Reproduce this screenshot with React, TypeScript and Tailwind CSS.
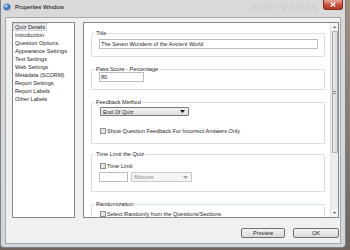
import React from "react";

const Check = () => (
  <span className="w-[6px] h-[6px] shrink-0 border border-[#8e8f8f] bg-[#e4e4e4]" />
);

const Arrow = ({ color }: { color: string }) => (
  <svg width="5" height="3" viewBox="0 0 5 3" className="shrink-0">
    <path d="M0 0 L5 0 L2.5 3 Z" fill={color} />
  </svg>
);

const GroupBox = ({
  label,
  className,
  children,
}: {
  label: string;
  className: string;
  children: React.ReactNode;
}) => (
  <div className={`relative w-[234px] ml-[7px] shrink-0 border border-[#d5dfe5] rounded-[2px] pl-[7px] pr-[6px] ${className}`}>
    <span className="absolute left-[3px] top-[-4px] bg-white px-[1px] leading-[6px] whitespace-nowrap">{label}</span>
    {children}
  </div>
);

export default function App() {
  const items = [
    "Quiz Details",
    "Introduction",
    "Question Options",
    "Appearance Settings",
    "Text Settings",
    "Web Settings",
    "Metadata (SCORM)",
    "Report Settings",
    "Report Labels",
    "Other Labels",
  ];
  return (
    <div className="w-[350px] h-[250px] overflow-hidden bg-gradient-to-b from-[#a39080] to-[#6f655e] font-['Liberation_Sans',Arial,sans-serif] text-[5.6px] leading-[6px] text-[#262626]">
      <div className="w-[346px] h-[248px] flex flex-col bg-gradient-to-b from-[#dbd9d7] to-[#d3d6da] border-x border-b border-[#7c8289] rounded-b-[4px]">
        {/* title bar */}
        <div className="h-[17px] shrink-0 flex items-start">
          <svg width="8" height="8" viewBox="0 0 8 8" className="ml-[2px] mt-[3px]">
            <circle cx="4" cy="4" r="3.6" fill="#3a78c8" />
            <circle cx="3" cy="3" r="1.8" fill="#9cc8f0" />
            <path d="M4.5 5 L7 6.5 L6 7.5 Z" fill="#e8a030" />
          </svg>
          <span className="ml-[4px] mt-[4px] text-[5.8px] leading-[6px] text-black whitespace-nowrap">Properties Window</span>
          <div className="flex-1" />
          <span className="mt-[1px] mr-[4px] font-['Liberation_Serif',serif] text-[11px] leading-[12px] tracking-[1px] text-[#cfcac6] whitespace-nowrap">SOFTPEDIA</span>
          <div className="w-[20px] h-[10px] mr-[2px] flex items-center justify-center rounded-b-[3px] border border-t-0 border-[#7d2c20] bg-gradient-to-b from-[#e7a897] via-[#cf5440] to-[#b5381f]">
            <svg width="6" height="5" viewBox="0 0 6 5">
              <path d="M0.8 0.5 L5.2 4.5 M5.2 0.5 L0.8 4.5" stroke="#ffffff" strokeWidth="1.3" />
            </svg>
          </div>
        </div>
        {/* client */}
        <div className="flex-1 mx-[4px] mb-[3px] flex flex-col bg-[#f0f0f0] border border-[#a3a9b0] pl-[6px] pr-[1px] pt-[4px]">
          <div className="flex h-[196px] gap-[8px] shrink-0">
            <div className="w-[63px] h-full shrink-0 border border-[#828790] bg-white pl-[1px] flex flex-col">
              {items.map((t, i) => (
                <div key={t} className="h-[8px] leading-[8px] whitespace-nowrap">
                  <span className={i === 0 ? "px-[1px] bg-[#e9ecef] outline outline-[0.5px] outline-[#d0d4d8]" : "px-[1px]"}>{t}</span>
                </div>
              ))}
            </div>
            <div className="w-[256px] h-full shrink-0 border border-[#828790] bg-white flex">
              <div className="flex-1 overflow-hidden flex flex-col pt-[10px]">
                <GroupBox label="Title" className="pt-[5px] pb-[7px]">
                  <div className="h-[10px] border border-[#b9bdc2] bg-white flex items-center pl-[1px] whitespace-nowrap">
                    The Seven Wonders of the Ancient World
                  </div>
                </GroupBox>
                <GroupBox label="Pass Score - Percentage" className="mt-[12px] pt-[2px] pb-[7px]">
                  <div className="h-[10px] w-[45px] border border-[#b9bdc2] bg-white flex items-center pl-[1px]">80</div>
                </GroupBox>
                <GroupBox label="Feedback Method" className="mt-[12px] pt-[4px] pb-[9px]">
                  <div className="h-[9px] w-[89px] ml-[1px] rounded-[1px] border border-[#7a7a7a] bg-gradient-to-b from-[#f4f4f4] to-[#dedede] flex items-center pl-[2px] pr-[3px] whitespace-nowrap">
                    <span className="flex-1">End Of Quiz</span>
                    <Arrow color="#111" />
                  </div>
                  <div className="h-[7px] mt-[11px] ml-[1px] flex items-center gap-[1px] whitespace-nowrap">
                    <Check />
                    <span>Show Question Feedback For Incorrect Answers Only</span>
                  </div>
                </GroupBox>
                <GroupBox label="Time Limit the Quiz" className="mt-[10px] pt-[8px] pb-[9px]">
                  <div className="h-[6px] ml-[1px] flex items-center gap-[1px] whitespace-nowrap">
                    <Check />
                    <span>Time Limit</span>
                  </div>
                  <div className="mt-[3px] flex gap-[3px]">
                    <div className="h-[10px] w-[29px] border border-[#b9bdc2] bg-white" />
                    <div className="h-[10px] w-[61px] border border-[#c5c8cc] bg-[#f4f4f4] rounded-[1px] flex items-center pl-[2px] pr-[3px] text-[#8d8d8d]">
                      <span className="flex-1">Minutes</span>
                      <Arrow color="#a0a0a0" />
                    </div>
                  </div>
                </GroupBox>
                <GroupBox label="Randomization" className="mt-[12px] pt-[6px] pb-[8px]">
                  <div className="h-[6px] ml-[1px] flex items-center gap-[1px] whitespace-nowrap">
                    <Check />
                    <span>Select Randomly from the Questions/Sections</span>
                  </div>
                </GroupBox>
              </div>
              {/* scrollbar */}
              <div className="w-[8px] h-full shrink-0 flex flex-col bg-[#ececec] border-l border-[#e2e2e2]">
                <div className="h-[8px] flex items-center justify-center bg-[#f4f4f4]">
                  <svg width="3" height="2" viewBox="0 0 3 2"><path d="M0 2 L3 2 L1.5 0 Z" fill="#555" /></svg>
                </div>
                <div className="h-[122px] mx-[0.5px] rounded-[1px] border border-[#a8adb2] bg-gradient-to-r from-[#ebebeb] to-[#d4d7da] flex items-center justify-center">
                  <div className="w-[3px] h-[3px] border-y border-[#8a8f94]" />
                </div>
                <div className="flex-1" />
                <div className="h-[8px] flex items-center justify-center bg-[#f4f4f4]">
                  <svg width="3" height="2" viewBox="0 0 3 2"><path d="M0 0 L3 0 L1.5 2 Z" fill="#555" /></svg>
                </div>
              </div>
            </div>
          </div>
          <div className="mt-[10px] flex justify-end gap-[8px]">
            <div className="w-[44px] h-[10px] rounded-[2px] border border-[#707070] bg-gradient-to-b from-[#f3f3f3] to-[#d9d9d9] flex items-center justify-center">Preview</div>
            <div className="w-[46px] h-[10px] rounded-[2px] border border-[#707070] bg-gradient-to-b from-[#f3f3f3] to-[#d9d9d9] flex items-center justify-center">OK</div>
          </div>
        </div>
      </div>
    </div>
  );
}
